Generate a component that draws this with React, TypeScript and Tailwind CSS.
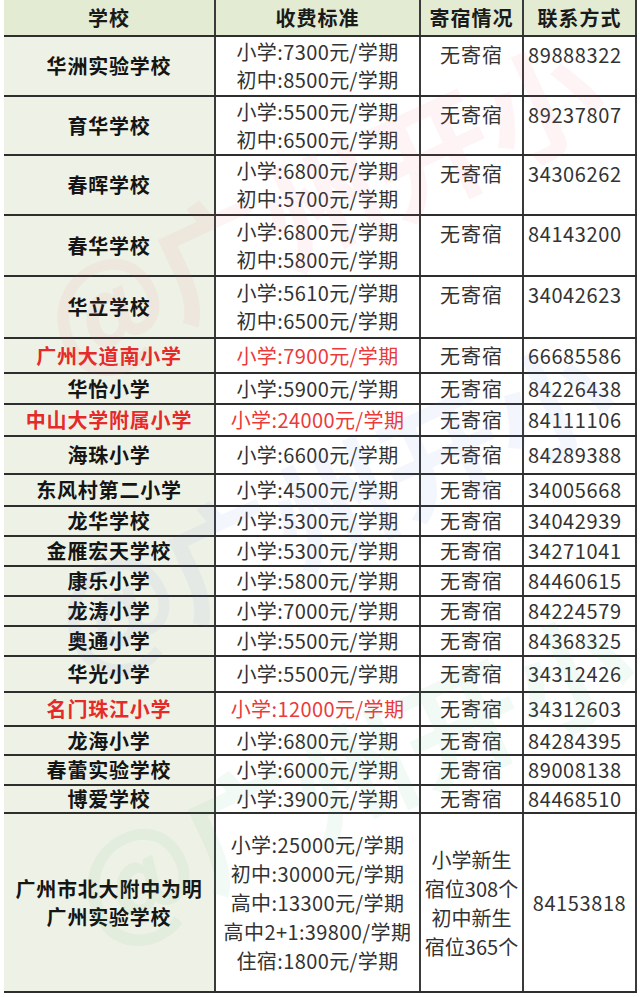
const font = "font-['Noto_Sans_CJK_SC','Noto_Sans',sans-serif]";

type Row = {
  name: string;
  fees: string[];
  phone: string;
  h: string;
  red?: boolean;
};

const rows: Row[] = [
  { name: "华洲实验学校", fees: ["小学:7300元/学期", "初中:8500元/学期"], phone: "89888322", h: "h-[60px]" },
  { name: "育华学校", fees: ["小学:5500元/学期", "初中:6500元/学期"], phone: "89237807", h: "h-[59px]" },
  { name: "春晖学校", fees: ["小学:6800元/学期", "初中:5700元/学期"], phone: "34306262", h: "h-[60px]" },
  { name: "春华学校", fees: ["小学:6800元/学期", "初中:5800元/学期"], phone: "84143200", h: "h-[61px]" },
  { name: "华立学校", fees: ["小学:5610元/学期", "初中:6500元/学期"], phone: "34042623", h: "h-[62px]" },
  { name: "广州大道南小学", fees: ["小学:7900元/学期"], phone: "66685586", h: "h-[35px]", red: true },
  { name: "华怡小学", fees: ["小学:5900元/学期"], phone: "84226438", h: "h-[31px]" },
  { name: "中山大学附属小学", fees: ["小学:24000元/学期"], phone: "84111106", h: "h-[32px]", red: true },
  { name: "海珠小学", fees: ["小学:6600元/学期"], phone: "84289388", h: "h-[38px]" },
  { name: "东风村第二小学", fees: ["小学:4500元/学期"], phone: "34005668", h: "h-[32px]" },
  { name: "龙华学校", fees: ["小学:5300元/学期"], phone: "34042939", h: "h-[30px]" },
  { name: "金雁宏天学校", fees: ["小学:5300元/学期"], phone: "34271041", h: "h-[30px]" },
  { name: "康乐小学", fees: ["小学:5800元/学期"], phone: "84460615", h: "h-[30px]" },
  { name: "龙涛小学", fees: ["小学:7000元/学期"], phone: "84224579", h: "h-[30px]" },
  { name: "奥通小学", fees: ["小学:5500元/学期"], phone: "84368325", h: "h-[30px]" },
  { name: "华光小学", fees: ["小学:5500元/学期"], phone: "34312426", h: "h-[36px]" },
  { name: "名门珠江小学", fees: ["小学:12000元/学期"], phone: "34312603", h: "h-[34px]", red: true },
  { name: "龙海小学", fees: ["小学:6800元/学期"], phone: "84284395", h: "h-[29px]" },
  { name: "春蕾实验学校", fees: ["小学:6000元/学期"], phone: "89008138", h: "h-[30px]" },
  { name: "博爱学校", fees: ["小学:3900元/学期"], phone: "84468510", h: "h-[28px]" },
];

const grid = "grid grid-cols-[212px_205px_103px_113px] grid-rows-[100%] border-b-2 border-[#2e2e2e]";
const cell = "min-h-0 border-r-2 border-[#3a3a3a]";

export default function App() {
  return (
    <div className={`relative h-[997px] w-[640px] overflow-hidden bg-white ${font}`}>
      <div className="ml-[4px] w-[633px]">
        <div className={`${grid} h-[37px] bg-[#e3ebd3] text-[20px] font-bold leading-none tracking-[1px] text-[#1a1a1a]`}>
          <div className={`${cell} flex items-center justify-center`}>学校</div>
          <div className={`${cell} flex items-center justify-center`}>收费标准</div>
          <div className={`${cell} flex items-center justify-center`}>寄宿情况</div>
          <div className={`${cell} flex items-center justify-center`}>联系方式</div>
        </div>

        {rows.map((r) => {
          const multi = r.fees.length > 1;
          return (
            <div key={r.name} className={`${grid} ${r.h}`}>
              <div
                className={`${cell} flex items-center justify-center bg-[#eef2e6] text-[20px] font-bold leading-none tracking-[0.8px] ${
                  r.red ? "text-[#e52a2a]" : "text-[#151515]"
                }`}
              >
                {r.name}
              </div>
              <div
                className={`${cell} flex flex-col items-center justify-center text-[20px] tracking-[0.4px] ${
                  r.red ? "text-[#ea3a3a]" : "text-[#333]"
                }`}
              >
                {r.fees.map((f) => (
                  <div key={f} className={multi ? "leading-[28px]" : "leading-none"}>
                    {f}
                  </div>
                ))}
              </div>
              <div
                className={`${cell} flex justify-center text-[20px] tracking-[1px] text-[#333] ${
                  multi ? "items-start pt-[4px] leading-[28px]" : "items-center leading-none"
                }`}
              >
                无寄宿
              </div>
              <div
                className={`${cell} flex pl-[4px] text-[20px] tracking-[0.6px] text-[#333] ${
                  multi ? "items-start pt-[4px] leading-[28px]" : "items-center leading-none"
                }`}
              >
                {r.phone}
              </div>
            </div>
          );
        })}

        <div className={`${grid} h-[179px]`}>
          <div className={`${cell} flex flex-col items-center justify-center bg-[#eef2e6] text-[20px] font-bold leading-[28px] tracking-[0.8px] text-[#151515]`}>
            <div>广州市北大附中为明</div>
            <div>广州实验学校</div>
          </div>
          <div className={`${cell} flex flex-col items-center justify-center text-[20px] leading-[29px] tracking-[0.4px] text-[#333]`}>
            <div>小学:25000元/学期</div>
            <div>初中:30000元/学期</div>
            <div>高中:13300元/学期</div>
            <div>高中2+1:39800/学期</div>
            <div>住宿:1800元/学期</div>
          </div>
          <div className={`${cell} flex flex-col items-center justify-center text-[20px] leading-[29px] text-[#333]`}>
            <div>小学新生</div>
            <div>宿位308个</div>
            <div>初中新生</div>
            <div>宿位365个</div>
          </div>
          <div className={`${cell} flex items-center justify-center text-[20px] tracking-[0.6px] text-[#333]`}>
            84153818
          </div>
        </div>
      </div>

      {/* watermark */}
      <div className="pointer-events-none absolute inset-0 overflow-hidden font-bold">
        <div className="absolute left-[-20px] top-[140px] w-[680px] -rotate-[25deg] whitespace-nowrap text-center text-[120px] leading-none text-[#f06a7a]/[0.07]">
          @广州开小
        </div>
        <div className="absolute left-[-10px] top-[440px] w-[680px] -rotate-[25deg] whitespace-nowrap text-center text-[120px] leading-none text-[#6a7ef0]/[0.07]">
          @广州开小
        </div>
        <div className="absolute left-[10px] top-[710px] w-[680px] -rotate-[25deg] whitespace-nowrap text-center text-[120px] leading-none text-[#4cb87a]/[0.07]">
          @广州开小
        </div>
      </div>
    </div>
  );
}
